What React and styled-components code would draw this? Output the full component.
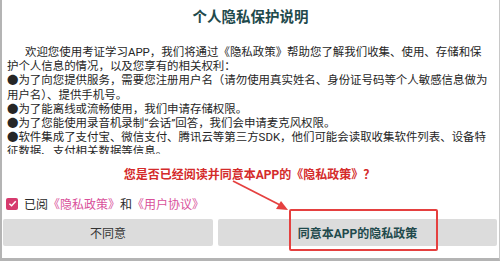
import React, { useState } from 'react';
import styled, { createGlobalStyle } from 'styled-components';

const GlobalStyle = createGlobalStyle`
  html, body {
    margin: 0;
    padding: 0;
    background: #ffffff;
  }
  body {
    font-family: Roboto, "Noto Sans CJK SC", sans-serif;
  }
`;

const Dialog = styled.div`
  position: relative;
  box-sizing: border-box;
  width: 500px;
  height: 261px;
  background: #ffffff;
  border-left: 2px solid #b4b4b4;
  border-right: 1px solid #c8c8c8;
  border-bottom: 3px solid #b4b4b4;
  display: flex;
  flex-direction: column;
`;

const Title = styled.h1`
  margin: 0;
  height: 36px;
  line-height: 36px;
  text-align: center;
  font-size: 14.5px;
  font-weight: 700;
  color: #1f4a4c;
`;

const Content = styled.div`
  margin-top: 9px;
  height: 109px;
  overflow: hidden;
  padding: 0 2px 0 5px;
  font-size: 11.45px;
  line-height: 14.2px;
  color: #262626;
`;

const Line = styled.div`
  white-space: nowrap;
  padding-left: ${(p) => (p.$indent ? '18px' : '0')};
`;

const Question = styled.div`
  margin-top: 13px;
  height: 16px;
  line-height: 16px;
  text-align: center;
  font-size: 12px;
  font-weight: 700;
  color: #d42b2b;
  padding-left: 0;
  transform: translateX(-1px);
`;

const CheckRow = styled.label`
  margin-top: 12px;
  height: 17px;
  display: flex;
  align-items: center;
  gap: 6px;
  padding-left: 4px;
  font-size: 12px;
  color: #2a2a2a;
  cursor: pointer;
`;

const Box = styled.span`
  width: 12px;
  height: 12px;
  border-radius: 2px;
  background: ${(p) => (p.$checked ? '#d63a6e' : '#ffffff')};
  border: ${(p) => (p.$checked ? 'none' : '1.5px solid #888')};
  display: flex;
  align-items: center;
  justify-content: center;
  flex-shrink: 0;
`;

const Link = styled.span`
  color: #d9509a;
`;

const ButtonRow = styled.div`
  margin-top: 7px;
  display: flex;
  gap: 5px;
  padding: 0 2px 0 1px;
`;

const Button = styled.button`
  flex: ${(p) => p.$grow};
  height: 27px;
  border: none;
  border-radius: 2px;
  background: #dcdcdc;
  font-family: Roboto, "Noto Sans CJK SC", sans-serif;
  font-size: 12px;
  font-weight: ${(p) => (p.$primary ? 700 : 400)};
  color: ${(p) => (p.$primary ? '#1f4a4c' : '#333333')};
  cursor: pointer;
  padding: 0;
`;

const Highlight = styled.div`
  position: absolute;
  left: 287px;
  top: 209px;
  width: 149px;
  height: 42px;
  border: 2px solid #e5403f;
  border-radius: 2px;
  box-sizing: border-box;
  pointer-events: none;
`;

const Arrow = styled.svg`
  position: absolute;
  left: 228px;
  top: 178px;
  pointer-events: none;
`;

const lines = [
  { text: '欢迎您使用考证学习APP，我们将通过《隐私政策》帮助您了解我们收集、使用、存储和保', indent: true },
  { text: '护个人信息的情况，以及您享有的相关权利：' },
  { text: '●为了向您提供服务，需要您注册用户名（请勿使用真实姓名、身份证号码等个人敏感信息做为' },
  { text: '用户名）、提供手机号。' },
  { text: '●为了能离线或流畅使用，我们申请存储权限。' },
  { text: '●为了您能使用录音机录制“会话”回答，我们会申请麦克风权限。' },
  { text: '●软件集成了支付宝、微信支付、腾讯云等第三方SDK，他们可能会读取收集软件列表、设备特' },
  { text: '征数据、支付相关数据等信息。' },
];

const App = () => {
  const [checked, setChecked] = useState(true);

  return (
    <>
      <GlobalStyle />
      <Dialog>
        <Title>个人隐私保护说明</Title>

        <Content>
          {lines.map((l, i) => (
            <Line key={i} $indent={l.indent}>{l.text}</Line>
          ))}
        </Content>

        <Question>您是否已经阅读并同意本APP的《隐私政策》？</Question>

        <CheckRow onClick={() => setChecked(!checked)}>
          <Box $checked={checked}>
            {checked && (
              <svg width="9" height="9" viewBox="0 0 10 10">
                <path d="M1.5 5.2 L4 7.6 L8.6 2.6" fill="none" stroke="#fff" strokeWidth="1.6" />
              </svg>
            )}
          </Box>
          <span>
            已阅<Link>《隐私政策》</Link>和<Link>《用户协议》</Link>
          </span>
        </CheckRow>

        <ButtonRow>
          <Button $grow="210">不同意</Button>
          <Button $grow="279" $primary>同意本APP的隐私政策</Button>
        </ButtonRow>

        {/* annotation overlay */}
        <Arrow width="62" height="36" viewBox="0 0 62 36">
          <line x1="3" y1="3" x2="50" y2="27" stroke="#e5403f" strokeWidth="1.8" />
          <polygon points="58,32 46,31 51,23" fill="#e5403f" />
        </Arrow>
        <Highlight />
      </Dialog>
    </>
  );
};

export default App;
